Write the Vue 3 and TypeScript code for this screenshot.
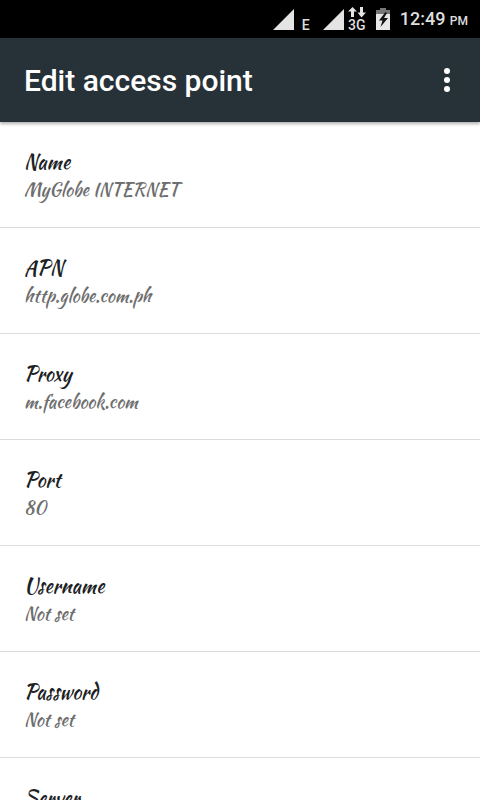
<script setup lang="ts">
interface Field {
  name: string
  value?: string
}

const fields: Field[] = [
  { name: 'Name', value: 'MyGlobe INTERNET' },
  { name: 'APN', value: 'http.globe.com.ph' },
  { name: 'Proxy', value: 'm.facebook.com' },
  { name: 'Port', value: '80' },
  { name: 'Username', value: 'Not set' },
  { name: 'Password', value: 'Not set' },
  { name: 'Server' },
]
</script>

<template>
  <div class="screen">
    <div class="status">
      <div class="signal first">
        <svg class="bars" viewBox="0 0 21 21" aria-hidden="true"><path d="M21 0V21H0Z" /></svg>
        <span class="net"><span>E</span></span>
      </div>
      <div class="signal">
        <svg class="bars" viewBox="0 0 21 21" aria-hidden="true"><path d="M21 0V21H0Z" /></svg>
        <span class="net">
          <svg class="arrows" viewBox="0 0 18 11" aria-hidden="true">
            <path d="M4.500 0L9 4.500H6V10H3V4.500H0ZM12 0H15V5.500H18L13.500 10.500L9.500 5.500H12Z" />
          </svg>
          <span>3G</span>
        </span>
      </div>
      <svg class="battery" viewBox="0 0 14 22" aria-hidden="true">
        <path class="cap" d="M4 0H10V2H14V6H0V2H4Z" />
        <path class="cell" d="M0 6H14V22H0Z" />
        <path class="bolt" d="M9.500 4L3 12.500H6.500L4.500 19L12 10H8L11 5Z" />
      </svg>
      <span class="clock">12:49 <small>PM</small></span>
    </div>
    <header class="bar">
      <h1>Edit access point</h1>
      <button class="more" type="button" aria-label="More options">
        <svg viewBox="0 0 6 24" aria-hidden="true">
          <circle cx="3" cy="3" r="3" />
          <circle cx="3" cy="12" r="3" />
          <circle cx="3" cy="21" r="3" />
        </svg>
      </button>
    </header>
    <main class="list">
      <button v-for="field in fields" :key="field.name" class="row" type="button">
        <span class="name">{{ field.name }}</span>
        <span class="value">{{ field.value }}</span>
      </button>
    </main>
  </div>
</template>

<style>
body {
  margin: 0;
  background: #fff;
}
</style>

<style scoped>
.screen {
  display: flex;
  flex-direction: column;
  height: 100vh;
  overflow: hidden;
  background: #fff;
  font-family: Roboto, sans-serif;
}
.status {
  display: flex;
  flex: none;
  align-items: center;
  justify-content: flex-end;
  box-sizing: border-box;
  height: 38px;
  padding: 0 12px 0 0;
  background: #000;
  color: #dedede;
}
.signal {
  display: flex;
  align-items: flex-end;
  gap: 4px;
  height: 22px;
  margin-right: 10px;
}
.first {
  gap: 8px;
  margin-right: 13px;
}
.bars {
  width: 21px;
  height: 21px;
  fill: #e4e4e4;
}
.net {
  display: flex;
  flex-direction: column;
  align-items: center;
  gap: 2px;
  font-size: 14px;
  font-weight: 500;
  line-height: 10px;
}
.arrows {
  width: 18px;
  height: 11px;
  fill: #e4e4e4;
}
.battery {
  width: 14px;
  height: 22px;
  margin-right: 10px;
}
.cap {
  fill: #777;
}
.cell {
  fill: #e6e6e6;
}
.bolt {
  fill: #111;
}
.clock {
  padding-top: 2px;
  font-size: 18px;
  font-weight: 500;
  line-height: 22px;
  white-space: nowrap;
}
.clock small {
  font-size: 12px;
}
.bar {
  position: relative;
  display: flex;
  flex: none;
  align-items: center;
  justify-content: space-between;
  height: 84px;
  padding: 0 18px 0 24px;
  background: #273238;
  color: #fff;
  box-shadow: 0 2px 3px rgba(0, 0, 0, 0.3);
}
h1 {
  margin: 0;
  padding-top: 2px;
  font-size: 30px;
  font-weight: 500;
  line-height: 40px;
}
.more {
  display: flex;
  justify-content: center;
  width: 30px;
  padding: 0;
  border: 0;
  background: none;
}
.more svg {
  width: 6px;
  height: 24px;
  fill: #fff;
}
.list {
  display: flex;
  flex: 1;
  flex-direction: column;
  min-height: 0;
  overflow-y: auto;
  scrollbar-width: none;
}
.row {
  display: flex;
  flex: none;
  flex-direction: column;
  box-sizing: border-box;
  height: 106px;
  padding: 26px 24px 0;
  border: 0;
  border-bottom: 1px solid #dcdcdc;
  background: none;
  font-family: "Kaushan Script", "Liberation Serif", cursive;
  line-height: 28px;
  text-align: left;
}
.name {
  color: #1c2224;
  font-size: 20px;
}
.value {
  color: #6e6e6e;
  font-size: 18px;
}
</style>
